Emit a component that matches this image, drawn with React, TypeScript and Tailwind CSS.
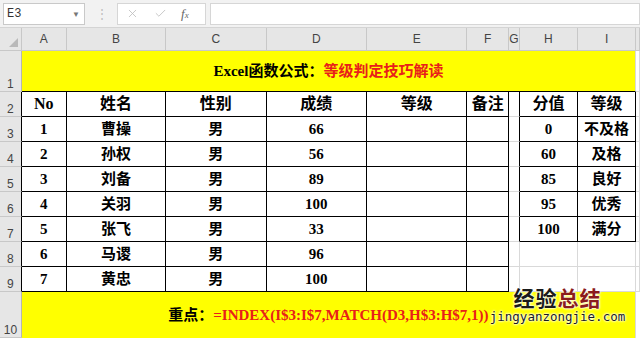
import { X, Check } from "lucide-react";

const colWidths = [22, 45, 100, 101, 101, 101, 42, 8, 59, 58, 4];
const letters = ["A", "B", "C", "D", "E", "F", "G", "H", "I", ""];

const people = [
  ["1", "曹操", "男", "66"],
  ["2", "孙权", "男", "56"],
  ["3", "刘备", "男", "89"],
  ["4", "关羽", "男", "100"],
  ["5", "张飞", "男", "33"],
  ["6", "马谡", "男", "96"],
  ["7", "黄忠", "男", "100"],
];

const grades = [
  ["0", "不及格"],
  ["60", "及格"],
  ["85", "良好"],
  ["95", "优秀"],
  ["100", "满分"],
];

const serif = "font-['Liberation_Serif','Noto_Sans_CJK_SC',serif] font-bold";
const hdr = "bg-[#e6e6e6] text-[#444] font-['Liberation_Sans','Noto_Sans',sans-serif] text-[12px] font-normal";
const box = "border-r border-b border-black text-center align-middle";
const grid = "border-r border-b border-[#d9d9d9]";

function RowHead({ n, dark }: { n: number; dark?: boolean }) {
  return (
    <td
      className={`${hdr} border-b border-[#c8c8c8] border-r ${
        dark ? "border-r-black" : "border-r-[#b5b5b5]"
      } text-center align-bottom pb-[1px] leading-none`}
    >
      {n}
    </td>
  );
}

function Toolbar() {
  return (
    <div className="flex h-[28px] items-center border-b border-[#d4d4d4] bg-[#f2f2f2] pl-[3px]">
      <div className="flex h-[22px] w-[82px] items-center justify-between border border-[#c9c9c9] bg-white pl-[3px] pr-[4px]">
        <span className="font-['Liberation_Mono',monospace] text-[12px] text-[#333]">E3</span>
        <span className="text-[8px] text-[#777]">▼</span>
      </div>
      <span className="ml-[11px] text-[12px] leading-none text-[#bdbdbd]">⋮</span>
      <div className="ml-[9px] flex h-[22px] w-[89px] items-center border border-[#d6d6d6] bg-white">
        <X size={13} strokeWidth={1.5} className="ml-[8px] text-[#bdbdbd]" />
        <Check size={13} strokeWidth={1.5} className="ml-[15px] text-[#bdbdbd]" />
        <span className="ml-[14px] font-['Liberation_Serif',serif] text-[13px] italic text-[#666]">
          f<span className="text-[9px]">x</span>
        </span>
      </div>
      <div className="ml-[4px] h-[22px] flex-1 border border-[#d6d6d6] bg-white" />
    </div>
  );
}

export default function App() {
  return (
    <div className="relative h-[338px] w-[640px] overflow-hidden bg-white">
      <Toolbar />
      <table className="table-fixed border-separate border-spacing-0">
        <colgroup>
          {colWidths.map((w, i) => (
            <col key={i} style={{ width: w }} />
          ))}
        </colgroup>
        <tbody>
          <tr className="h-[23px]">
            <td className={`${hdr} border-r border-b border-[#c8c8c8] relative`}>
              <span className="absolute bottom-[3px] right-[3px] h-0 w-0 border-b-[9px] border-l-[9px] border-b-[#b9b9b9] border-l-transparent" />
            </td>
            {letters.map((l, i) => (
              <td key={i} className={`${hdr} border-r border-b border-[#c8c8c8] text-center`}>
                {l}
              </td>
            ))}
          </tr>

          <tr className="h-[41px]">
            <RowHead n={1} />
            <td
              colSpan={9}
              className={`bg-[#ffff00] border-r border-r-[#d9d9d9] border-b border-b-black text-center align-middle text-[15px] ${serif}`}
            >
              <span className="text-black">Excel函数公式：</span>
              <span className="text-[#e8201a]">等级判定技巧解读</span>
            </td>
            <td className={grid} />
          </tr>

          {Array.from({ length: 8 }).map((_, k) => {
            const r = k + 2;
            const row = r === 2 ? ["No", "姓名", "性别", "成绩"] : people[r - 3];
            const g = r === 2 ? ["分值", "等级"] : grades[r - 3];
            const isHead = r === 2;
            const txt = isHead ? "text-[16px]" : "text-[15px]";
            return (
              <tr key={r} className="h-[25px]">
                <RowHead n={r} dark />
                {row.map((c, i) => (
                  <td key={i} className={`${box} ${serif} ${txt} text-black`}>
                    {c}
                  </td>
                ))}
                <td className={`${box} ${serif} ${txt}`}>{isHead ? "等级" : ""}</td>
                <td className={`${box} ${serif} ${txt}`}>{isHead ? "备注" : ""}</td>
                <td className={`border-b border-[#d9d9d9] border-r ${g ? "border-r-black" : "border-r-[#d9d9d9]"}`} />
                {g ? (
                  <>
                    <td className={`${box} ${serif} ${txt}`}>{g[0]}</td>
                    <td className={`${box} ${serif} ${txt}`}>{g[1]}</td>
                  </>
                ) : (
                  <>
                    <td className={grid} />
                    <td className={grid} />
                  </>
                )}
                <td className={grid} />
              </tr>
            );
          })}

          <tr className="h-[46px]">
            <RowHead n={10} />
            <td
              colSpan={9}
              className={`bg-[#ffff00] border-r border-r-[#d9d9d9] text-center align-middle text-[15px] ${serif}`}
            >
              <span className="text-black">重点：</span>
              <span className="text-[#e8201a]">=INDEX(I$3:I$7,MATCH(D3,H$3:H$7,1))</span>
            </td>
            <td />
          </tr>
        </tbody>
      </table>

      {/* watermark */}
      <div className="absolute left-[489px] top-[287px] flex w-[137px] flex-col items-center leading-none">
        <div className="font-['Noto_Sans_CJK_SC',sans-serif] text-[21px] font-bold tracking-[1px] [text-shadow:0_0_2px_#fff,0_0_2px_#fff,0_0_3px_#fff]">
          <span className="text-[#1a1a1a]">经验</span>
          <span className="text-[#8b1c1c]">总结</span>
        </div>
        <div className="mt-[3px] font-['DejaVu_Sans_Mono',monospace] text-[12.5px] text-[#1a1a1a] [text-shadow:0_0_2px_#fff,0_0_2px_#fff,0_0_3px_#fff]">
          jingyanzongjie.com
        </div>
      </div>
    </div>
  );
}
